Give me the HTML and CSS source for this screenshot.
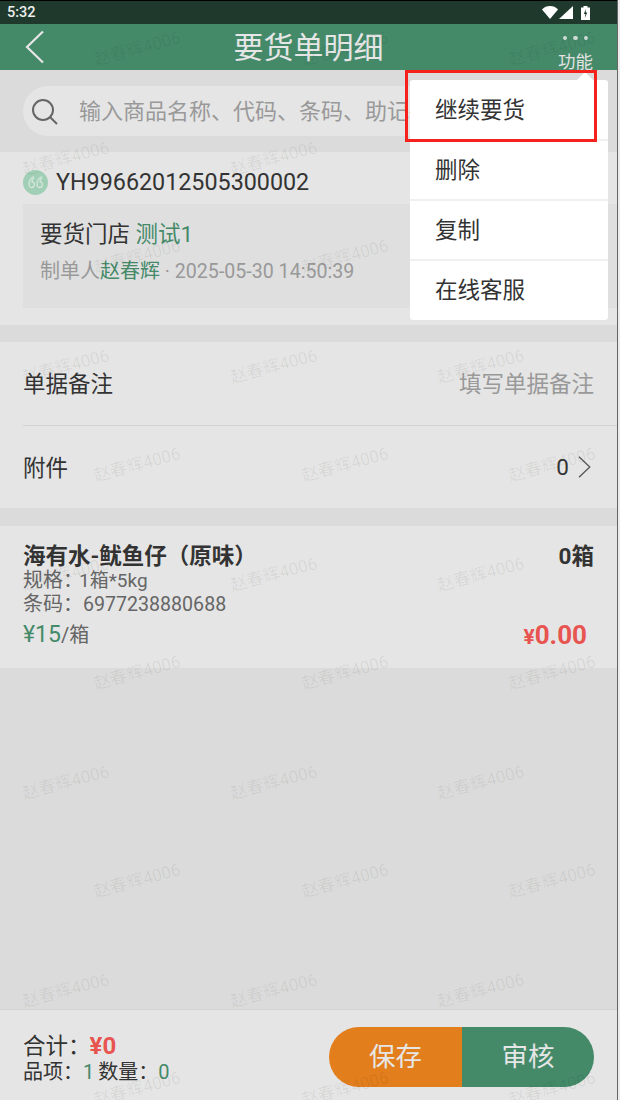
FILE: index.html
```html
<!DOCTYPE html>
<html lang="zh">
<head>
<meta charset="utf-8">
<title>要货单明细</title>
<link rel="stylesheet" href="styles.css">
</head>
<body>
<div class="app">
  <div class="status">
    <span class="time">5:32</span>
    <div class="status-icons">
      <svg class="ico-wifi" width="16" height="13" viewBox="0 0 16 13"><path d="M0 3.400C2 1.200 5 0 8 0s6 1.200 8 3.400L8 13z" fill="#fff"/></svg>
      <svg class="ico-signal" width="14" height="13" viewBox="0 0 14 13"><path d="M14 0v13H0z" fill="#fff"/></svg>
      <svg class="ico-batt" width="9" height="14" viewBox="0 0 9 14"><path d="M2.500 0h4v1.500H9V14H0V1.500h2.500z" fill="#fff"/><path d="M5 3 2.800 8h1.600L3.800 12 6.300 6.600H4.700z" fill="#1f3a2c"/></svg>
    </div>
  </div>
  <header class="topbar">
    <div class="back">
      <svg width="20" height="34" viewBox="0 0 20 34"><path d="M18 1.500 2 17l16 15.500" fill="none" stroke="#e6e6e6" stroke-width="2.200"/></svg>
    </div>
    <h1 class="title">要货单明细</h1>
    <div class="func">
      <div class="dots"><i></i><i></i><i></i></div>
      <span class="func-label">功能</span>
    </div>
  </header>
  <div class="search-wrap">
    <div class="search">
      <svg class="search-ico" width="27" height="27" viewBox="0 0 27 27"><circle cx="11" cy="11" r="10" fill="none" stroke="#666" stroke-width="2"/><path d="M18.200 18.200 25 25" stroke="#666" stroke-width="2" fill="none"/></svg>
      <span class="placeholder">输入商品名称、代码、条码、助记码</span>
    </div>
  </div>

  <section class="card doc">
    <div class="doc-head">
      <svg class="doc-ico" width="25" height="25" viewBox="0 0 25 25"><circle cx="12.500" cy="12.500" r="12.500" fill="#a0cfb5"/><path d="M11 6.500C8 8 6 10.500 6 14c0 2 1 3.500 2.700 3.500S11.400 16 11.400 14.500s-1-2.700-2.500-2.700c.2-1.900.8-3 2.300-4M19 6.500C16 8 14 10.500 14 14c0 2 1 3.500 2.700 3.500s2.700-1.500 2.700-3-1-2.700-2.500-2.700c.2-1.900.8-3 2.300-4" fill="none" stroke="#d4e6da" stroke-width="1.300"/></svg>
      <span class="doc-no">YH99662012505300002</span>
    </div>
    <div class="doc-box">
      <div class="doc-store">要货门店 <span class="green">测试1</span></div>
      <div class="doc-meta">制单人<span class="green">赵春辉</span><span class="doc-date"> · 2025-05-30 14:50:39</span></div>
    </div>
  </section>

  <section class="card notes">
    <div class="row row-first">
      <span>单据备注</span>
      <span class="muted">填写单据备注</span>
    </div>
    <div class="row row-second">
      <span>附件</span>
      <span class="attach">0
        <svg width="13" height="22" viewBox="0 0 13 22"><path d="M1 .7 11.800 11 1 21.300" fill="none" stroke="#555" stroke-width="1.300"/></svg>
      </span>
    </div>
  </section>

  <section class="card product">
    <div class="prod-left">
      <div class="prod-name">海有水-鱿鱼仔（原味）</div>
      <div class="prod-sub">规格：<span class="spec-val">1箱*5kg</span></div>
      <div class="prod-sub prod-code">条码：<span class="code-val">6977238880688</span></div>
      <div class="prod-price"><span class="green">¥15</span><span class="unit">/箱</span></div>
    </div>
    <div class="prod-right">
      <div class="prod-qty">0箱</div>
      <div class="prod-total"><span class="yen">¥</span>0.00</div>
    </div>
  </section>

  <div class="spacer"></div>

  <footer class="bottom">
    <div class="sums">
      <div class="sum-main">合计：<b class="red">¥0</b></div>
      <div class="sum-sub">品项：<span class="green">1</span> <span class="sum-qty">数量：</span><span class="green">0</span></div>
    </div>
    <div class="actions">
      <div class="btn btn-save">保存</div>
      <div class="btn btn-check">审核</div>
    </div>
  </footer>

  <div class="marks">
    <div class="mark-row odd"><span>赵春辉4006</span><span>赵春辉4006</span><span>赵春辉4006</span></div>
    <div class="mark-row even"><span>赵春辉4006</span><span>赵春辉4006</span><span>赵春辉4006</span></div>
    <div class="mark-row odd"><span>赵春辉4006</span><span>赵春辉4006</span><span>赵春辉4006</span></div>
    <div class="mark-row even"><span>赵春辉4006</span><span>赵春辉4006</span><span>赵春辉4006</span></div>
    <div class="mark-row odd"><span>赵春辉4006</span><span>赵春辉4006</span><span>赵春辉4006</span></div>
    <div class="mark-row even"><span>赵春辉4006</span><span>赵春辉4006</span><span>赵春辉4006</span></div>
    <div class="mark-row odd"><span>赵春辉4006</span><span>赵春辉4006</span><span>赵春辉4006</span></div>
    <div class="mark-row even"><span>赵春辉4006</span><span>赵春辉4006</span><span>赵春辉4006</span></div>
    <div class="mark-row odd"><span>赵春辉4006</span><span>赵春辉4006</span><span>赵春辉4006</span></div>
    <div class="mark-row even"><span>赵春辉4006</span><span>赵春辉4006</span><span>赵春辉4006</span></div>
    <div class="mark-row odd"><span>赵春辉4006</span><span>赵春辉4006</span><span>赵春辉4006</span></div>
  </div>

  <div class="menu">
    <div class="menu-arrow"></div>
    <div class="menu-item">继续要货</div>
    <div class="menu-item">删除</div>
    <div class="menu-item">复制</div>
    <div class="menu-item">在线客服</div>
  </div>
  <div class="highlight"></div>
</div>
</body>
</html>
```
FILE: styles.css
```css
* { box-sizing: border-box; }
html, body { margin: 0; padding: 0; }
body {
  width: 620px;
  height: 1100px;
  overflow: hidden;
  background: #ececec;
  font-family: Roboto, "Noto Sans CJK SC", sans-serif;
  color: #333;
}
.app {
  position: relative;
  width: 618px;
  height: 1100px;
  overflow: hidden;
  display: flex;
  flex-direction: column;
  background: #dbdbdb;
  border-right: 1px solid #666;
}
.green { color: #448a69; }
.red { color: #e85450; }

/* status */
.status {
  height: 24px;
  flex: none;
  background: #1f3a2c;
  border-top: 1px solid #000;
  display: flex;
  justify-content: space-between;
  align-items: center;
  padding: 0 27px 0 7px;
}
.time { color: #eee; font-size: 14.500px; font-weight: 500; line-height: 22px; }
.status-icons { display: flex; align-items: center; }
.ico-wifi { margin-right: 1px; }
.ico-signal { margin-right: 8px; }

/* header */
.topbar {
  height: 46px;
  flex: none;
  background: #448a69;
  display: grid;
  grid-template-columns: 1fr auto 1fr;
  align-items: start;
}
.back { padding: 6px 0 0 25px; }
.back svg { display: block; }
.title {
  margin: 0;
  padding-top: 1px;
  font-size: 30px;
  font-weight: 400;
  line-height: 46px;
  color: #e6e6e6;
}
.func {
  justify-self: end;
  padding: 11px 24px 0 0;
  display: flex;
  flex-direction: column;
  align-items: flex-end;
}
.dots { display: flex; gap: 6px; padding-right: 5px; height: 6px; align-items: center; }
.dots i { width: 4.500px; height: 4.500px; border-radius: 50%; background: #cfdcd5; }
.func-label { font-size: 17.500px; line-height: 22px; margin-top: 10px; color: #e2e2e2; }

/* search */
.search-wrap { flex: none; padding: 16px 20px 16px 23px; }
.search {
  height: 50px;
  border-radius: 25px;
  background: #e5e5e5;
  display: flex;
  align-items: center;
  padding-left: 9px;
  overflow: hidden;
}
.search-ico { flex: none; margin-top: 3px; }
.placeholder { margin-left: 20px; padding-bottom: 4px; font-size: 22px; color: #999; white-space: nowrap; }

/* cards */
.card { background: #e5e5e5; flex: none; }
.doc { height: 173px; padding-top: 18px; }
.doc-head { display: flex; align-items: center; height: 25px; padding-left: 23px; }
.doc-ico { flex: none; }
.doc-no { margin-left: 8px; font-size: 23.300px; line-height: 25px; color: #333; }
.doc-box {
  margin: 9px 0 0 23px;
  height: 104px;
  background: #dfdfdf;
  padding: 17px 17px 0;
}
.doc-store { font-size: 22.500px; line-height: 26px; color: #333; }
.doc-meta { margin-top: 12px; font-size: 20px; line-height: 24px; color: #999; }
.doc-date { font-size: 19.600px; }

.notes { margin-top: 17px; height: 166px; }
.row {
  margin-left: 23px;
  padding-right: 23px;
  display: flex;
  justify-content: space-between;
  align-items: center;
  font-size: 22.500px;
  color: #333;
}
.row-first { height: 84px; padding-bottom: 4px; border-bottom: 1px solid #d2d2d2; }
.row-second { height: 82px; padding-bottom: 3px; }
.muted { color: #999; }
.attach { display: flex; align-items: center; gap: 9px; padding: 3px 3px 0 0; }

.product {
  margin-top: 18px;
  height: 142px;
  padding: 18px 23px 0 23px;
  display: flex;
  justify-content: space-between;
}
.prod-name { font-size: 22.500px; font-weight: 700; line-height: 24px; color: #333; }
.prod-sub { font-size: 20px; line-height: 24px; color: #666; }
.spec-val { font-size: 19px; margin-left: -4px; }
.code-val { font-size: 19.600px; }
.prod-code { margin-top: -1px; }
.prod-price { margin-top: 6px; line-height: 24px; font-size: 23px; }
.unit { font-size: 20px; color: #666; }
.prod-right { display: flex; flex-direction: column; align-items: flex-end; }
.prod-qty { font-size: 22.500px; font-weight: 700; line-height: 24px; color: #333; }
.prod-total {
  margin-top: 52px;
  padding-right: 7px;
  font-size: 26px;
  font-weight: 700;
  line-height: 30px;
  color: #e85450;
}
.yen { font-size: 21px; }

.spacer { flex: 1; }

/* bottom */
.bottom {
  flex: none;
  height: 91px;
  background: #e5e5e5;
  border-top: 1px solid #d2d2d2;
  display: flex;
  justify-content: space-between;
  padding: 17px 23px 0 23px;
}
.sums { padding-top: 5px; }
.sum-main { font-size: 22.500px; line-height: 28px; color: #333; }
.sum-main b { font-size: 24px; margin-left: -1px; }
.sum-sub { font-size: 20px; line-height: 24px; color: #333; }
.sum-qty { margin-left: -1px; }
.actions { display: flex; width: 265px; height: 60px; border-radius: 30px; overflow: hidden; }
.btn {
  display: flex;
  align-items: center;
  justify-content: center;
  padding-bottom: 5px;
  font-size: 26.500px;
  color: #e6e6e6;
}
.btn-save { width: 133px; background: #e27e1c; }
.btn-check { width: 132px; background: #448a69; }

/* watermarks */
.marks { position: absolute; left: 0; top: 37px; width: 618px; pointer-events: none; }
.mark-row { display: flex; gap: 119.500px; white-space: nowrap; }
.mark-row.odd { height: 110px; padding-left: 104px; }
.mark-row.even { height: 98px; padding-left: 31px; }
.mark-row span {
  display: block;
  width: 88px;
  flex: none;
  font-size: 17px;
  line-height: 20px;
  color: rgba(0, 0, 0, 0.065);
  transform: rotate(-15deg);
}

/* popup */
.menu {
  position: absolute;
  left: 410px;
  top: 80px;
  width: 198px;
  background: #fff;
  border-radius: 3px;
}
.menu-arrow {
  position: absolute;
  right: 15px;
  top: -8px;
  width: 0;
  height: 0;
  border-left: 8px solid transparent;
  border-right: 8px solid transparent;
  border-bottom: 8px solid #fff;
}
.menu-item {
  height: 60px;
  padding: 0 0 5px 25px;
  display: flex;
  align-items: center;
  font-size: 22.500px;
  color: #333;
  border-bottom: 2px solid #f0f0f0;
}
.menu-arrow + .menu-item { height: 61px; padding-bottom: 3px; }
.menu-item:last-child { height: 59px; padding-bottom: 6px; border-bottom: none; }
.highlight {
  position: absolute;
  left: 405px;
  top: 70px;
  width: 192px;
  height: 72px;
  border: 3px solid #f5211c;
}
```
